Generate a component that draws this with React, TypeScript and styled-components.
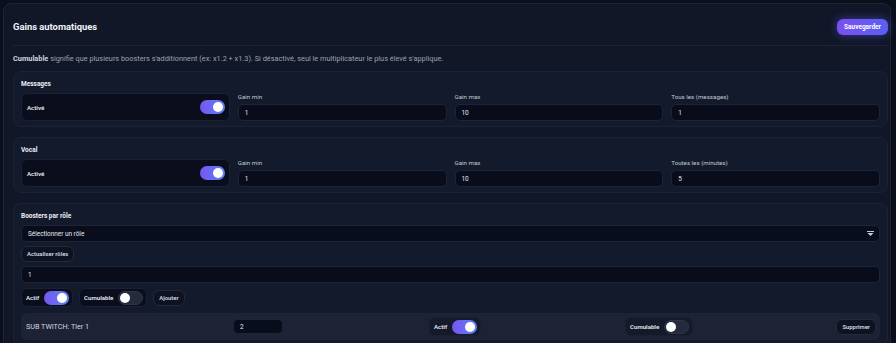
import React from "react";
import styled, { createGlobalStyle } from "styled-components";

const GlobalStyle = createGlobalStyle`
  html, body {
    margin: 0;
    padding: 0;
    background: #0b0f1b;
    font-family: Roboto, Inter, "Noto Sans", "Liberation Sans", sans-serif;
    color: #e4e7ee;
  }
  * { box-sizing: border-box; }
`;

const Page = styled.div`
  padding: 3px 5px 0 3px;
  height: 343px;
  overflow: hidden;
`;

const Card = styled.div`
  background: #111727;
  border: 1px solid #1d2437;
  border-radius: 8px;
  padding: 0 2px 20px 9px;
  min-height: 400px;
`;

const Header = styled.div`
  display: flex;
  align-items: center;
  justify-content: space-between;
  height: 42px;
  padding-top: 4px;
  border-bottom: 1px solid #1d2437;
`;

const Title = styled.h1`
  margin: 0;
  font-size: 9.4px;
  font-weight: 700;
  color: #f1f3f8;
`;

const SaveButton = styled.button`
  border: none;
  border-radius: 6px;
  height: 16px;
  width: 51px;
  padding: 0;
  font-family: inherit;
  font-size: 6.5px;
  font-weight: 700;
  color: #fff;
  background: linear-gradient(90deg, #7a50f0, #5a5ff2);
  box-shadow: 0 0 10px rgba(92, 90, 240, 0.55);
`;

const Note = styled.p`
  margin: 0;
  padding: 8px 0 7px;
  font-size: 7.35px;
  line-height: 10px;
  color: #9aa2b3;

  b {
    color: #cfd4de;
    font-weight: 700;
  }
`;

const Section = styled.section`
  background: #121a2b;
  border: 1px solid #1c2336;
  border-radius: 8px;
  padding: 7px 7px 5px;
  margin-bottom: 10px;
`;

const SectionTitle = styled.div`
  font-size: 6.5px;
  font-weight: 700;
  line-height: 10px;
  color: #eef0f5;
  margin-bottom: 4px;
`;

const Grid = styled.div`
  display: grid;
  grid-template-columns: repeat(4, 1fr);
  gap: 8px;
  height: 28px;
`;

const SwitchBox = styled.div<{ $fill?: boolean }>`
  display: flex;
  align-items: center;
  justify-content: ${({ $fill }) => ($fill ? "space-between" : "flex-start")};
  gap: 5px;
  background: #0a0e1c;
  border: 1px solid #1b2132;
  border-radius: 6px;
  padding: ${({ $fill }) => ($fill ? "0 4px 0 5px" : "0 3px 0 4px")};
  height: ${({ $fill }) => ($fill ? "28px" : "19px")};
  font-size: 6.1px;
  font-weight: 600;
  color: #e6e9f0;
`;

const Track = styled.span<{ $on: boolean }>`
  position: relative;
  display: inline-block;
  width: 25px;
  height: 14px;
  border-radius: 7px;
  background: ${({ $on }) =>
    $on ? "linear-gradient(90deg, #7a55f0, #5a82f6)" : "#242b3c"};
  border: ${({ $on }) => ($on ? "none" : "1px solid #2e3547")};

  &::after {
    content: "";
    position: absolute;
    top: ${({ $on }) => ($on ? "2px" : "1px")};
    left: ${({ $on }) => ($on ? "13px" : "1px")};
    width: 10px;
    height: 10px;
    border-radius: 50%;
    background: #fff;
  }
`;

const Field = styled.div`
  display: flex;
  flex-direction: column;
  justify-content: flex-end;
  gap: 3px;
`;

const Label = styled.label`
  font-size: 6.2px;
  line-height: 8px;
  color: #c3c8d3;
`;

const Input = styled.div<{ $w?: number; $h?: number }>`
  display: flex;
  align-items: center;
  height: ${({ $h }) => $h ?? 17}px;
  width: ${({ $w }) => ($w ? `${$w}px` : "auto")};
  padding: 0 6px;
  background: #090d1b;
  border: 1px solid #1d2436;
  border-radius: 5px;
  font-size: 6.4px;
  color: #e6e9f0;
`;

const Select = styled(Input)`
  justify-content: space-between;
  padding-right: 5px;
`;

const Stack = styled.div`
  display: flex;
  flex-direction: column;
  align-items: stretch;
  gap: 4px;
`;

const Row = styled.div`
  display: flex;
`;

const Ghost = styled.button<{ $h?: number }>`
  display: block;
  height: ${({ $h }) => $h ?? 16}px;
  padding: 0 5px;
  background: #0e1322;
  border: 1px solid #232a3d;
  border-radius: 6px;
  font-family: inherit;
  font-size: 5.9px;
  font-weight: 600;
  color: #d4d8e2;
`;

const Controls = styled.div`
  display: flex;
  align-items: center;
  gap: 6px;
  margin: 1px 0;
`;

const Item = styled.div`
  display: grid;
  grid-template-columns: 199px 188px 188px 1fr auto;
  gap: 8px;
  align-items: center;
  height: 27px;
  padding: 0 4px 0 5px;
  background: #1d2334;
  border-radius: 6px;
  margin-top: 1px;
`;

const ItemName = styled.span`
  font-size: 7.2px;
  color: #d3d7e1;
`;

const Cell = styled.div`
  display: flex;
  justify-content: flex-start;
`;

const ItemSwitch = styled(SwitchBox)`
  background: #141a2a;
  border-color: #1a2030;
`;

const Arrow = () => (
  <svg width="7" height="5" viewBox="0 0 7 5">
    <rect x="0" y="0" width="7" height="1" fill="#c9cdd7" />
    <path d="M0.5 2h6L3.5 5z" fill="#c9cdd7" />
  </svg>
);

const GainSection: React.FC<{ title: string; every: string; vals: string[] }> = ({
  title,
  every,
  vals,
}) => (
  <Section>
    <SectionTitle>{title}</SectionTitle>
    <Grid>
      <SwitchBox $fill>
        Activé
        <Track $on />
      </SwitchBox>
      <Field>
        <Label>Gain min</Label>
        <Input>{vals[0]}</Input>
      </Field>
      <Field>
        <Label>Gain max</Label>
        <Input>{vals[1]}</Input>
      </Field>
      <Field>
        <Label>{every}</Label>
        <Input>{vals[2]}</Input>
      </Field>
    </Grid>
  </Section>
);

export default function App() {
  return (
    <>
      <GlobalStyle />
      <Page>
        <Card>
          <Header>
            <Title>Gains automatiques</Title>
            <SaveButton>Sauvegarder</SaveButton>
          </Header>
          <Note>
            <b>Cumulable</b> signifie que plusieurs boosters s'additionnent (ex: x1.2 + x1.3). Si
            désactivé, seul le multiplicateur le plus élevé s'applique.
          </Note>
          <GainSection title="Messages" every="Tous les (messages)" vals={["1", "10", "1"]} />
          <GainSection title="Vocal" every="Toutes les (minutes)" vals={["1", "10", "5"]} />
          <Section>
            <SectionTitle>Boosters par rôle</SectionTitle>
            <Stack>
              <Select>
                Sélectionner un rôle
                <Arrow />
              </Select>
              <Row>
                <Ghost>Actualiser rôles</Ghost>
              </Row>
              <Input>1</Input>
              <Controls>
                <SwitchBox>
                  Actif
                  <Track $on />
                </SwitchBox>
                <SwitchBox>
                  Cumulable
                  <Track $on={false} />
                </SwitchBox>
                <Ghost>Ajouter</Ghost>
              </Controls>
              <Item>
                <ItemName>SUB TWITCH: Tier 1</ItemName>
                <Cell>
                  <Input $w={50} $h={15}>
                    2
                  </Input>
                </Cell>
                <Cell>
                  <ItemSwitch>
                    Actif
                    <Track $on />
                  </ItemSwitch>
                </Cell>
                <Cell>
                  <ItemSwitch>
                    Cumulable
                    <Track $on={false} />
                  </ItemSwitch>
                </Cell>
                <Ghost>Supprimer</Ghost>
              </Item>
            </Stack>
          </Section>
        </Card>
      </Page>
    </>
  );
}
